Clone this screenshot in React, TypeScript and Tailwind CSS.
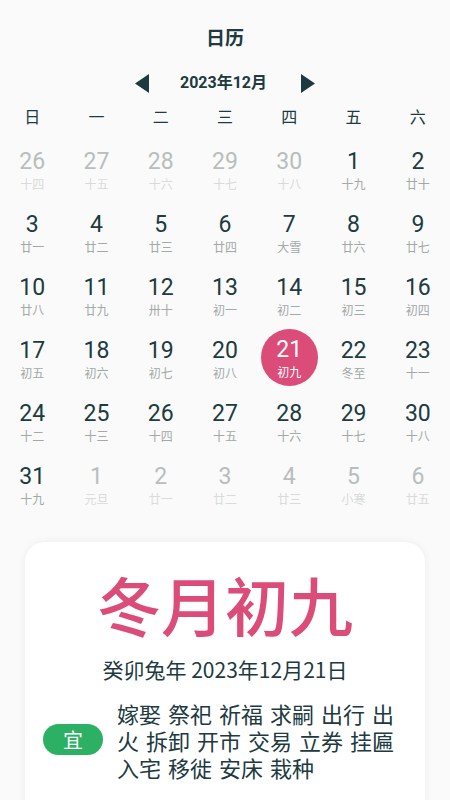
type Day = { d: number; l: string; dim?: boolean };

const days: Day[] = [
  { d: 26, l: '十四', dim: true },
  { d: 27, l: '十五', dim: true },
  { d: 28, l: '十六', dim: true },
  { d: 29, l: '十七', dim: true },
  { d: 30, l: '十八', dim: true },
  { d: 1, l: '十九' },
  { d: 2, l: '廿十' },
  { d: 3, l: '廿一' },
  { d: 4, l: '廿二' },
  { d: 5, l: '廿三' },
  { d: 6, l: '廿四' },
  { d: 7, l: '大雪' },
  { d: 8, l: '廿六' },
  { d: 9, l: '廿七' },
  { d: 10, l: '廿八' },
  { d: 11, l: '廿九' },
  { d: 12, l: '卅十' },
  { d: 13, l: '初一' },
  { d: 14, l: '初二' },
  { d: 15, l: '初三' },
  { d: 16, l: '初四' },
  { d: 17, l: '初五' },
  { d: 18, l: '初六' },
  { d: 19, l: '初七' },
  { d: 20, l: '初八' },
  { d: 21, l: '初九' },
  { d: 22, l: '冬至' },
  { d: 23, l: '十一' },
  { d: 24, l: '十二' },
  { d: 25, l: '十三' },
  { d: 26, l: '十四' },
  { d: 27, l: '十五' },
  { d: 28, l: '十六' },
  { d: 29, l: '十七' },
  { d: 30, l: '十八' },
  { d: 31, l: '十九' },
  { d: 1, l: '元旦', dim: true },
  { d: 2, l: '廿一', dim: true },
  { d: 3, l: '廿二', dim: true },
  { d: 4, l: '廿三', dim: true },
  { d: 5, l: '小寒', dim: true },
  { d: 6, l: '廿五', dim: true },
];

const weekdays = ['日', '一', '二', '三', '四', '五', '六'];

const suitable = '嫁娶 祭祀 祈福 求嗣 出行 出火 拆卸 开市 交易 立券 挂匾 入宅 移徙 安床 栽种';

function DayCell({ day }: { day: Day }) {
  const selected = !day.dim && day.d === 21;
  if (selected) {
    return (
      <div className="flex h-[63px] items-center justify-center">
        <div className="flex h-[57px] w-[57px] flex-col items-center justify-center rounded-full bg-[#dc4c79] text-white">
          <span className="font-['Roboto',sans-serif] text-[23px] leading-[26px]">{day.d}</span>
          <span className="mt-[2px] text-[12px] leading-[14px]">{day.l}</span>
        </div>
      </div>
    );
  }
  return (
    <div className="flex h-[63px] flex-col items-center justify-center pt-[2px]">
      <span
        className={`font-['Roboto',sans-serif] text-[23px] leading-[26px] ${
          day.dim ? 'text-[#b9bdbd]' : 'text-[#203a3f]'
        }`}
      >
        {day.d}
      </span>
      <span className={`mt-[2px] text-[12px] leading-[14px] ${day.dim ? 'text-[#d9dbdb]' : 'text-[#a3a8a8]'}`}>
        {day.l}
      </span>
    </div>
  );
}

export default function App() {
  return (
    <div className="min-h-[800px] w-[450px] overflow-hidden bg-[#fafafa] font-['Noto_Sans_CJK_SC',sans-serif] text-[#203a3f]">
      {/* Title */}
      <div className="flex h-[71px] items-center justify-center pt-[4px] text-[19px] font-bold">日历</div>

      {/* Month switcher */}
      <div className="flex h-[24px] items-center justify-center">
        <svg width="14" height="19" viewBox="0 0 14 19" className="mr-[31px]">
          <path d="M14 0 L0 9.5 L14 19 Z" fill="#1d3a40" />
        </svg>
        <span className="font-['Roboto','Noto_Sans_CJK_SC',sans-serif] text-[16px] font-bold">2023年12月</span>
        <svg width="14" height="19" viewBox="0 0 14 19" className="ml-[34px]">
          <path d="M0 0 L14 9.5 L0 19 Z" fill="#1d3a40" />
        </svg>
      </div>

      {/* Weekdays */}
      <div className="grid h-[42px] grid-cols-7 items-center text-center text-[16px]">
        {weekdays.map((w) => (
          <span key={w}>{w}</span>
        ))}
      </div>

      {/* Days */}
      <div className="grid grid-cols-7">
        {days.map((day, i) => (
          <DayCell key={i} day={day} />
        ))}
      </div>

      {/* Detail card */}
      <div className="mx-[25px] mt-[27px] rounded-t-[20px] bg-white pb-[40px] shadow-[0_0_8px_rgba(0,0,0,0.06)]">
        <div className="pt-[17px] text-center text-[64px] font-medium leading-[88px] text-[#dc4c79]">冬月初九</div>
        <div className="mt-[7px] text-center text-[21px] leading-[30px]">
          癸卯兔年 2023年12月21日
        </div>
        <div className="mt-[18px] flex items-center pl-[18px]">
          <div className="mb-[6px] flex h-[31px] w-[60px] shrink-0 items-center justify-center rounded-full bg-[#2cb164] text-[20px] text-white">
            宜
          </div>
          <p className="ml-[14px] w-[282px] font-['DejaVu_Sans','Noto_Sans_CJK_SC',sans-serif] text-[22px] leading-[27px] text-[#203a3f]">
            {suitable}
          </p>
        </div>
      </div>
    </div>
  );
}
